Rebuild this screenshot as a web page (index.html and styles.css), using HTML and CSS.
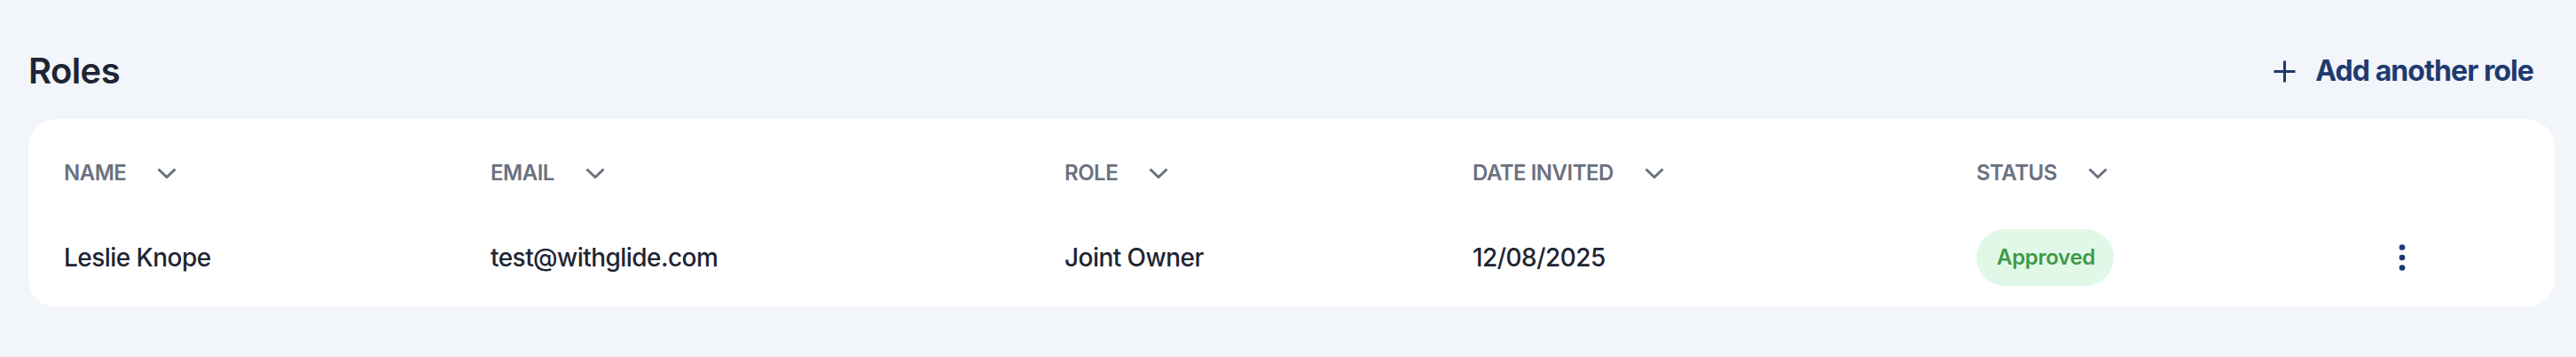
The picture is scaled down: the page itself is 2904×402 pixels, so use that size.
FILE: index.html
```html
<!DOCTYPE html>
<html lang="en">
<head>
<meta charset="utf-8">
<title>Roles</title>
<link rel="stylesheet" href="styles.css">
</head>
<body>
<div class="page">
  <div class="title-row">
    <h1 class="title">Roles</h1>
    <a class="add-link" href="#">
      <svg class="plus" width="25" height="25" viewBox="0 0 25 25"><path d="M12.5 0.5V24.5M0.5 12.5H24.5" stroke="currentColor" stroke-width="3" fill="none"/></svg>
      <span>Add another role</span>
    </a>
  </div>
  <div class="card">
    <div class="grid head">
      <div class="th"><span>NAME</span><svg class="chev" width="22" height="12" viewBox="0 0 22 12"><path d="M1.5 1.5L11 10.5L20.5 1.5" stroke="currentColor" stroke-width="3" fill="none"/></svg></div>
      <div class="th"><span>EMAIL</span><svg class="chev" width="22" height="12" viewBox="0 0 22 12"><path d="M1.5 1.5L11 10.5L20.5 1.5" stroke="currentColor" stroke-width="3" fill="none"/></svg></div>
      <div class="th"><span>ROLE</span><svg class="chev" width="22" height="12" viewBox="0 0 22 12"><path d="M1.5 1.5L11 10.5L20.5 1.5" stroke="currentColor" stroke-width="3" fill="none"/></svg></div>
      <div class="th"><span>DATE INVITED</span><svg class="chev" width="22" height="12" viewBox="0 0 22 12"><path d="M1.5 1.5L11 10.5L20.5 1.5" stroke="currentColor" stroke-width="3" fill="none"/></svg></div>
      <div class="th"><span>STATUS</span><svg class="chev" width="22" height="12" viewBox="0 0 22 12"><path d="M1.5 1.5L11 10.5L20.5 1.5" stroke="currentColor" stroke-width="3" fill="none"/></svg></div>
      <div class="th"></div>
    </div>
    <div class="grid body">
      <div class="td">Leslie Knope</div>
      <div class="td">test@withglide.com</div>
      <div class="td">Joint Owner</div>
      <div class="td">12/08/2025</div>
      <div class="td"><span class="pill">Approved</span></div>
      <div class="td">
        <svg class="kebab" width="10" height="32" viewBox="0 0 10 32"><circle cx="5" cy="4.5" r="3.3" fill="currentColor"/><circle cx="5" cy="16" r="3.3" fill="currentColor"/><circle cx="5" cy="27.5" r="3.3" fill="currentColor"/></svg>
      </div>
    </div>
  </div>
</div>
</body>
</html>
```

FILE: styles.css
```css
* { box-sizing: border-box; }
html, body {
  margin: 0;
  padding: 0;
  background: #f2f5fa;
  font-family: Inter, "Noto Sans", sans-serif;
  color: #1f2533;
}
.page {
  padding: 56px 24px 0 32px;
}
.title-row {
  display: flex;
  align-items: center;
  justify-content: space-between;
  height: 48px;
  padding-right: 24px;
}
.title {
  margin: 0;
  font-size: 40px;
  line-height: 48px;
  font-weight: 600;
  color: #1f2533;
  letter-spacing: -0.6px;
}
.add-link {
  display: flex;
  align-items: center;
  gap: 22px;
  color: #1f3a70;
  text-decoration: none;
  font-size: 32px;
  line-height: 48px;
  font-weight: 700;
  letter-spacing: -0.9px;
}
.plus { display: block; }
.card {
  margin-top: 30px;
  background: #ffffff;
  border-radius: 32px;
  padding: 45px 40px 24px 40px;
}
.grid {
  display: grid;
  grid-template-columns: 481px 647px 460px 568px 475px 1fr;
  align-items: center;
}
.head { height: 32px; }
.body { height: 64px; margin-top: 47px; }
.th {
  display: flex;
  align-items: center;
  gap: 35px;
  font-size: 24px;
  line-height: 32px;
  font-weight: 600;
  color: #6b7180;
  letter-spacing: -0.5px;
}
.chev { display: block; color: #6b7180; margin-top: -1px; }
.td {
  font-size: 28px;
  line-height: 36px;
  font-weight: 500;
  color: #1f2533;
  display: flex;
  align-items: center;
  letter-spacing: -0.55px;
}
.pill {
  display: inline-flex;
  align-items: center;
  height: 64px;
  padding: 0 21px 0 23px;
  border-radius: 32px;
  background: #e1f8e8;
  color: #3d9a4a;
  font-size: 24px;
  font-weight: 600;
  line-height: 32px;
  letter-spacing: -0.3px;
}
.kebab { display: block; color: #1f3a70; margin-top: -1px; }
```
